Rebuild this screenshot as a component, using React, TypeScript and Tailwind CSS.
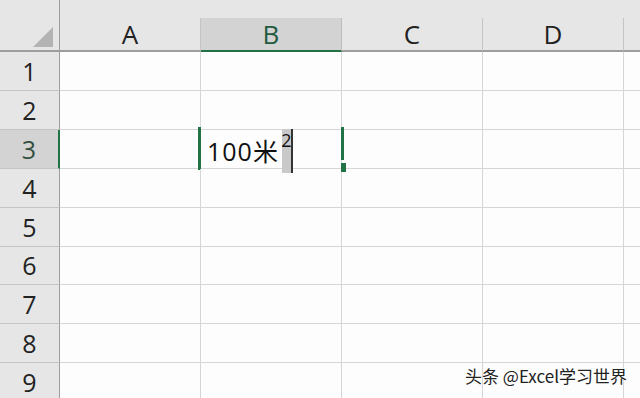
import type { ReactNode } from 'react';

const cols = ['A', 'B', 'C', 'D'];
const rowHeights = [39, 39, 39, 39, 39, 38, 39, 39, 39];

function HeaderCell({ label, active }: { label: string; active?: boolean }) {
  return (
    <div
      className={
        active
          ? 'flex w-[141px] shrink-0 items-center justify-center border-r border-b-2 border-r-[#bdbdbd] border-b-[#217346] bg-[#d3d3d3] text-[26px] leading-none text-[#235b40]'
          : 'flex w-[141px] shrink-0 items-center justify-center border-r border-b-2 border-r-[#c4c4c4] border-b-[#9d9d9d] text-[26px] leading-none text-[#222]'
      }
    >
      {label}
    </div>
  );
}

function RowHeader({ n, active }: { n: number; active?: boolean }) {
  return (
    <div
      className={
        active
          ? 'flex w-[60px] shrink-0 items-center justify-center border-r-2 border-b border-r-[#217346] border-b-[#c4c4c4] bg-[#d3d3d3] text-[25px] leading-none text-[#33503f]'
          : 'flex w-[60px] shrink-0 items-center justify-center border-r border-b border-r-[#9d9d9d] border-b-[#c4c4c4] bg-[#e6e6e6] text-[25px] leading-none text-[#222]'
      }
    >
      {n}
    </div>
  );
}

function Cell({ children }: { children?: ReactNode }) {
  return <div className="relative w-[141px] shrink-0 border-r border-b border-[#d6d6d6]">{children}</div>;
}

function EditingCell() {
  return (
    <div className="relative w-[141px] shrink-0 border-r border-b border-[#d6d6d6]">
      {/* selection border bits */}
      <div className="absolute left-[-3px] top-[-3px] h-[43px] w-[3px] bg-[#217346]" />
      <div className="absolute left-[140px] top-[-3px] h-[33px] w-[3px] bg-[#217346]" />
      <div className="absolute left-[140px] top-[33px] z-10 h-[9px] w-[5px] bg-[#217346]" />
      <div className="relative flex h-full items-end pl-[6px] font-['Open_Sans','Noto_Sans_CJK_SC',sans-serif] text-[25px] leading-none text-[#111]">
        <span className="mb-[4px] tracking-[1px]">100米</span>
        <span className="-mt-[1px] -mb-[5px] ml-[3px] flex w-[11px] self-stretch justify-center border-r-2 border-[#333] bg-[#c9c9c9] pt-[2px] text-[18px] leading-none">
          2
        </span>
      </div>
    </div>
  );
}

export default function App() {
  return (
    <div className="relative h-[398px] w-[640px] overflow-hidden bg-[#fdfdfd] font-['Open_Sans','Noto_Sans_CJK_SC',sans-serif]">
      <div className="h-[18px] bg-[#e6e6e6]">
        <div className="h-full w-[60px] border-r border-[#9d9d9d]" />
      </div>
      <div className="flex h-[34px] bg-[#e6e6e6]">
        <div className="flex w-[60px] shrink-0 items-end justify-end border-r border-b-2 border-r-[#9d9d9d] border-b-[#9d9d9d] pb-[3px] pr-[6px]">
          <svg width="20" height="20" viewBox="0 0 20 20">
            <polygon points="20,0 20,20 0,20" fill="#b3b3b3" />
          </svg>
        </div>
        {cols.map((c) => (
          <HeaderCell key={c} label={c} active={c === 'B'} />
        ))}
        <div className="flex-1 border-b-2 border-[#9d9d9d]" />
      </div>
      {rowHeights.map((h, i) => (
        <div key={i} className="flex" style={{ height: h }}>
          <RowHeader n={i + 1} active={i === 2} />
          <Cell />
          {i === 2 ? <EditingCell /> : <Cell />}
          <Cell />
          <Cell />
          <div className="flex-1 border-b border-[#d6d6d6]" />
        </div>
      ))}
      <div className="absolute left-[465px] top-[366px] font-['Noto_Sans_CJK_SC',sans-serif] text-[17px] leading-[20px] text-[#222] [text-shadow:0_0_2px_#fff,0_0_1px_#fff]">
        头条 @Excel学习世界
      </div>
    </div>
  );
}
